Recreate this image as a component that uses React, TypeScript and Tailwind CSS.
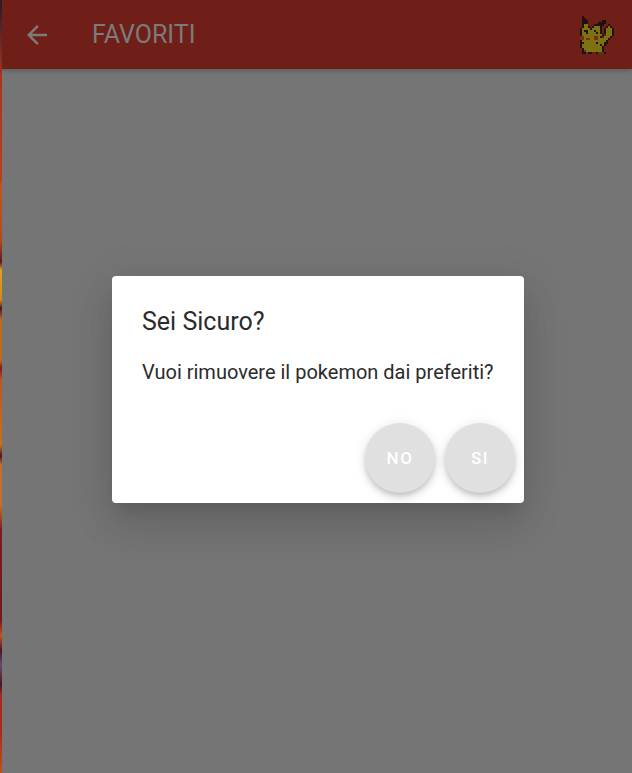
const sprite = [
  '..k...............',
  '..kk..............',
  '..kkk.......kk....',
  '..kkk.....kkkk....',
  '..kyy...kkkkk..k..',
  '..kyyk.kyyyk..kyk.',
  '.kyyyykyyyyk.kyyyk',
  '.kykkyyykyyk.kyyyk',
  '.kyykyyyykyk.kyyyk',
  '.kyyyyyyyyyyk.yyyk',
  '.rryyyyyrryk.yyyk.',
  '.rryrryyrryyyyyk..',
  '.kyyyyyyyyyyyyk...',
  '.kkyyyyyykyyykk...',
  '.kyyyyyyyyykyk....',
  '.kyyyyyyyyyyk.....',
  '..kyyyyyyyyyk.....',
  '..kbyyyyyyyyk.....',
  '..kkbkk..kbbbk....',
]

const colors: Record<string, string> = {
  k: '#1c140a',
  y: '#7f7012',
  r: '#7d2f14',
  b: '#4f3d10',
}

function Pikachu() {
  return (
    <svg width="36" height="38" viewBox="0 0 36 38" shapeRendering="crispEdges">
      {sprite.map((row, y) =>
        row.split('').map((c, x) =>
          colors[c] ? <rect key={`${x}-${y}`} x={x * 2} y={y * 2} width="2" height="2" fill={colors[c]} /> : null
        )
      )}
    </svg>
  )
}

function RoundButton({ label }: { label: string }) {
  return (
    <button className="w-[70px] h-[70px] pt-[1px] rounded-full bg-[#e0e0e0] text-white text-[17px] font-medium tracking-[1.5px] shadow-[0_3px_5px_-1px_rgba(0,0,0,0.14),0_5px_8px_0_rgba(0,0,0,0.1),0_1px_14px_0_rgba(0,0,0,0.08)]">
      {label}
    </button>
  )
}

export default function App() {
  return (
    <div className="w-[632px] h-[773px] flex overflow-hidden font-['Roboto',sans-serif]">
      <div className="w-[2px] bg-[linear-gradient(180deg,#2a1a2a_0px,#5a2a2a_30px,#a83420_70px,#b8401c_180px,#c0561c_185px,#b8481c_240px,#5a1a20_262px,#e0a020_270px,#d08a1c_300px,#4a1426_308px,#c06a1c_320px,#c06a20_360px,#7a1c1c_368px,#c0561c_380px,#c8701e_445px,#4a1426_456px,#c4702a_465px,#c4702a_505px,#7a1c1c_530px,#6e1c1c_620px,#c0561c_636px,#4a1426_650px,#6a4a6a_665px,#4a1426_685px,#a82a1a_695px,#a82a1a_730px,#c0501c_773px)]" />
      <div className="flex-1 flex flex-col">
        <header className="h-[69px] shrink-0 bg-[#701f18] flex items-center pl-[20px] pr-[18px] shadow-[0_2px_4px_rgba(0,0,0,0.2)] relative">
          <svg width="30" height="30" viewBox="0 0 24 24" fill="#7b7b7b">
            <path d="M20 11H7.83l5.59-5.59L12 4l-8 8 8 8 1.41-1.41L7.83 13H20v-2z" />
          </svg>
          <h1 className="ml-[40px] text-[25px] leading-[28px] text-[#7b7b7b] flex-1">FAVORITI</h1>
          <Pikachu />
        </header>
        <main className="flex-1 bg-[#757575] pt-[207px] pl-[110px]">
          <div className="w-[412px] h-[227px] bg-white rounded-[4px] shadow-[0_11px_15px_-7px_rgba(0,0,0,0.12),0_24px_38px_3px_rgba(0,0,0,0.08),0_9px_46px_8px_rgba(0,0,0,0.07)] flex flex-col pt-[30px] px-[30px] pb-[10px]">
            <h2 className="text-[25px] leading-[32px] text-[#2b2b2b]">Sei Sicuro?</h2>
            <p className="mt-[20px] text-[20px] leading-[28px] text-[#2b2b2b] whitespace-nowrap">Vuoi rimuovere il pokemon dai preferiti?</p>
            <div className="mt-auto flex justify-end gap-[10px] -mr-[21px]">
              <RoundButton label="NO" />
              <RoundButton label="SI" />
            </div>
          </div>
        </main>
      </div>
    </div>
  )
}
